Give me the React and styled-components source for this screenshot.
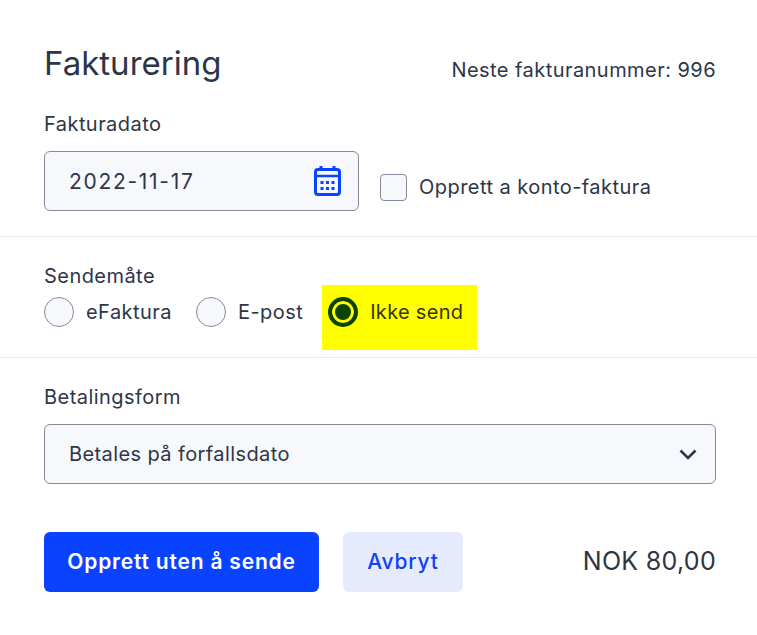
import React from 'react';
import styled, { createGlobalStyle } from 'styled-components';

const Global = createGlobalStyle`
  html, body { margin: 0; padding: 0; background: #fff; }
  body { font-family: Inter, "Liberation Sans", sans-serif; color: #2d3648; }
`;

const Page = styled.div`
  width: 757px;
  height: 635px;
  overflow: hidden;
  box-sizing: border-box;
`;

const Section = styled.section`
  padding: ${p => p.$padding};
  border-bottom: ${p => (p.$divider ? '1px solid #e9eaec' : 'none')};
  box-sizing: border-box;
  height: ${p => p.$height}px;
`;

const Header = styled.div`
  display: flex;
  justify-content: space-between;
  align-items: flex-end;
  height: 46px;
`;

const Title = styled.h1`
  margin: 0;
  font-size: 33px;
  font-weight: 400;
  line-height: 46px;
  letter-spacing: 0;
`;

const NextNumber = styled.div`
  font-size: 20px;
  line-height: 24px;
  letter-spacing: 0.45px;
  margin-bottom: 4px;
  white-space: nowrap;
`;

const Label = styled.div`
  font-size: 20px;
  line-height: 26px;
  letter-spacing: 0.45px;
  margin-top: ${p => p.$top || 0}px;
`;

const DateRow = styled.div`
  display: flex;
  align-items: flex-end;
  gap: 21px;
  margin-top: 14px;
`;

const Field = styled.div`
  width: ${p => p.$width}px;
  height: 60px;
  margin-top: ${p => p.$top || 0}px;
  box-sizing: border-box;
  display: flex;
  align-items: center;
  justify-content: space-between;
  padding: 0 ${p => p.$right}px 0 24px;
  background: #f6f8fc;
  border: 1px solid #858b9b;
  border-radius: 6px;
  font-size: ${p => p.$size}px;
  letter-spacing: ${p => p.$spacing}px;
`;

const CheckRow = styled.label`
  display: flex;
  align-items: center;
  gap: 12px;
  font-size: 20px;
  letter-spacing: 0.45px;
  margin-bottom: 10px;
  white-space: nowrap;
`;

const CheckText = styled.span`
  margin-top: -2px;
`;

const CheckBox = styled.span`
  width: 27px;
  height: 27px;
  box-sizing: border-box;
  background: #f6f8fc;
  border: 1px solid #858b9b;
  border-radius: 4px;
`;

const RadioRow = styled.div`
  display: flex;
  align-items: flex-start;
  margin-top: -4px;
`;

const RadioOption = styled.label`
  display: flex;
  align-items: center;
  gap: 12px;
  height: 30px;
  margin-top: ${p => p.$top || 0}px;
  margin-right: 24px;
  font-size: 20px;
  letter-spacing: ${p => p.$spacing || 0.45}px;
  white-space: nowrap;
`;

const Highlight = styled.div`
  background: #ffff00;
  width: 155px;
  height: 65px;
  box-sizing: border-box;
  padding: 12px 0 0 6px;
  margin-left: -5px;
  color: #393300;
`;

const Radio = styled.span`
  width: 30px;
  height: 30px;
  flex: none;
  box-sizing: border-box;
  border-radius: 50%;
  background: ${p => (p.$checked ? '#0c4400' : '#f6f8fc')};
  border: ${p => (p.$checked ? '4px solid #0c4400' : '1px solid #858b9b')};
  box-shadow: ${p => (p.$checked ? 'inset 0 0 0 3px #ffff00' : 'none')};
`;

const Actions = styled.div`
  display: flex;
  align-items: center;
  padding: 0 41px 0 44px;
  margin-top: 47px;
`;

const Button = styled.button`
  height: 60px;
  width: ${p => p.$width}px;
  margin-right: 24px;
  border: none;
  border-radius: 6px;
  background: ${p => (p.$primary ? '#0a43ff' : '#e6eafd')};
  color: ${p => (p.$primary ? '#fff' : '#0f41f5')};
  font-family: inherit;
  font-size: 21px;
  font-weight: ${p => (p.$primary ? 600 : 500)};
  letter-spacing: 0.8px;
  padding: 0 0 2px;
  white-space: nowrap;
`;

const Total = styled.div`
  margin-left: auto;
  margin-top: -2px;
  font-size: 25px;
  letter-spacing: 0.3px;
  color: #2f3540;
`;

function CalendarIcon() {
  return (
    <svg width="27" height="30" viewBox="0 0 27 30">
      <path d="M7 0v5M20 0v5" stroke="#0a43ff" strokeWidth="3" fill="none" />
      <rect x="1.5" y="3.5" width="24" height="25" rx="2.5" fill="none" stroke="#0a43ff" strokeWidth="3" />
      <path d="M1.5 10h24" stroke="#0a43ff" strokeWidth="2.5" />
      {[6.5, 12, 17.5].flatMap(x => [15, 21].map(y => (
        <rect key={`${x}-${y}`} x={x} y={y} width="3" height="3" fill="#0a43ff" />
      )))}
    </svg>
  );
}

function Chevron() {
  return (
    <svg width="18" height="11" viewBox="0 0 18 11">
      <path d="M1.5 1.5L9 9l7.5-7.5" fill="none" stroke="#2d3648" strokeWidth="2.6" />
    </svg>
  );
}

export default function App() {
  return (
    <Page>
      <Global />
      <Section $divider $height={237} $padding="40px 41px 0 44px">
        <Header>
          <Title>Fakturering</Title>
          <NextNumber>Neste fakturanummer: 996</NextNumber>
        </Header>
        <Label $top={25}>Fakturadato</Label>
        <DateRow>
          <Field $width={315} $right={17} $size={21} $spacing={1.7}>
            2022-11-17
            <CalendarIcon />
          </Field>
          <CheckRow>
            <CheckBox />
            <CheckText>Opprett a konto-faktura</CheckText>
          </CheckRow>
        </DateRow>
      </Section>
      <Section $divider $height={121} $padding="26px 0 0 44px">
        <Label>Sendemåte</Label>
        <RadioRow>
          <RadioOption $top={12}>
            <Radio />
            eFaktura
          </RadioOption>
          <RadioOption $top={12}>
            <Radio />
            E-post
          </RadioOption>
          <Highlight>
            <RadioOption $spacing={0.3}>
              <Radio $checked />
              Ikke send
            </RadioOption>
          </Highlight>
        </RadioRow>
      </Section>
      <Section $height={127} $padding="26px 41px 0 44px">
        <Label>Betalingsform</Label>
        <Field $width={672} $right={18} $size={20} $spacing={0.4} $top={14}>
          Betales på forfallsdato
          <Chevron />
        </Field>
      </Section>
      <Actions>
        <Button $primary $width={275}>Opprett uten å sende</Button>
        <Button $width={120}>Avbryt</Button>
        <Total>NOK 80,00</Total>
      </Actions>
    </Page>
  );
}
